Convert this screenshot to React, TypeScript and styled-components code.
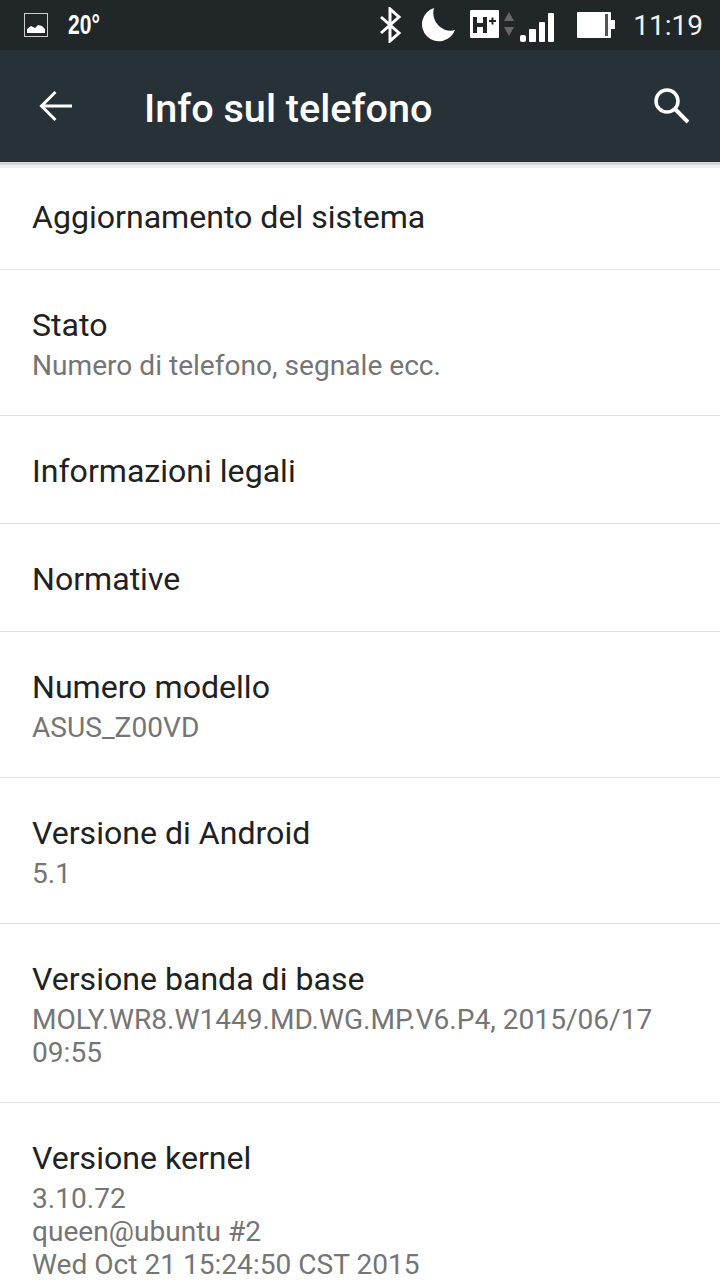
import React from "react";
import styled, { createGlobalStyle } from "styled-components";

const Global = createGlobalStyle`
  html, body { margin: 0; padding: 0; background: #fff; }
  body { width: 720px; height: 1280px; overflow: hidden; font-family: Roboto, "Liberation Sans", sans-serif; }
`;

const Screen = styled.div`
  width: 720px;
  height: 1280px;
  display: flex;
  flex-direction: column;
  overflow: hidden;
  background: #fff;
`;

const StatusBar = styled.div`
  height: 50px;
  flex: none;
  background: #212729;
  display: flex;
  align-items: center;
  padding: 0 17px 0 24px;
  color: #fff;
`;

const Temp = styled.span`
  margin-left: 20px;
  font-family: "Liberation Sans", sans-serif;
  font-weight: 700;
  font-size: 27px;
  transform: scaleX(0.78);
  transform-origin: left center;
  flex: 1;
`;

const Clock = styled.span`
  margin-left: 18px;
  font-size: 28px;
  color: #f2f2f2;
`;

const Toolbar = styled.header`
  height: 112px;
  flex: none;
  box-sizing: border-box;
  background: #263238;
  display: flex;
  align-items: center;
  padding: 0 31px 0 39px;
  box-shadow: 0 3px 0 #d4d4d4, 0 6px 0 #efefef;
  position: relative;
  z-index: 1;
`;

const ToolbarTitle = styled.h1`
  margin: 4px 0 0 71px;
  flex: 1;
  font-size: 39.6px;
  font-weight: 500;
  color: #fff;
`;

const List = styled.div`
  display: flex;
  flex-direction: column;
`;

const Row = styled.div`
  padding: 35px 32px 32px;
  border-bottom: 1px solid #e2e2e2;
`;

const RowTitle = styled.div`
  font-size: 32.1px;
  line-height: 40px;
  color: #212121;
`;

const RowSub = styled.div`
  font-size: 28.1px;
  line-height: 33px;
  color: #757575;
  margin: 4px 0 1px;
  white-space: pre-line;
`;

const Glyph = styled.svg<{ $gap?: number }>`
  display: block;
  flex: none;
  margin-left: ${(p) => p.$gap ?? 0}px;
`;

const rows: { title: string; sub?: string }[] = [
  { title: "Aggiornamento del sistema" },
  { title: "Stato", sub: "Numero di telefono, segnale ecc." },
  { title: "Informazioni legali" },
  { title: "Normative" },
  { title: "Numero modello", sub: "ASUS_Z00VD" },
  { title: "Versione di Android", sub: "5.1" },
  { title: "Versione banda di base", sub: "MOLY.WR8.W1449.MD.WG.MP.V6.P4, 2015/06/17\n09:55" },
  { title: "Versione kernel", sub: "3.10.72\nqueen@ubuntu #2\nWed Oct 21 15:24:50 CST 2015" },
];

export default function App() {
  return (
    <Screen>
      <Global />
      <StatusBar>
        <Glyph width="24" height="24" viewBox="0 0 24 24">
          <rect x="0.5" y="0.5" width="23" height="23" fill="none" stroke="#ccc" />
          <path d="M3 20v-4l4-3 4 2 3-3 4 1 3 3v4z" fill="#fff" />
        </Glyph>
        <Temp>20°</Temp>
        <Glyph width="24" height="36" viewBox="0 0 24 36">
          <path d="M3 10l18 16-9 8V2l9 8L3 26" fill="none" stroke="#fff" strokeWidth="3" />
        </Glyph>
        <Glyph width="34" height="34" viewBox="0 0 34 34" $gap={20}>
          <path d="M12 0A17 17 0 1 0 33 22C22 26 8 14 12 0z" fill="#fff" />
        </Glyph>
        <Glyph width="44" height="32" viewBox="0 0 44 32" $gap={14}>
          <rect x="0" y="1" width="29" height="28" rx="1" fill="#fff" />
          <path d="M3 8h4v6h6V8h4v16h-4v-6H7v6H3z" fill="#212729" />
          <path d="M19 12h7M22.500 8.500v7" stroke="#212729" strokeWidth="2" />
          <path d="M39 3l5 9H34zM34 18h10l-5 9z" fill="#666" />
        </Glyph>
        <Glyph width="34" height="34" viewBox="0 0 34 34" $gap={6}>
          <rect x="0" y="27" width="6" height="7" rx="2" fill="#fff" />
          <rect x="9" y="21" width="7" height="13" rx="1" fill="#fff" />
          <rect x="19" y="14" width="6" height="20" rx="1" fill="#fff" />
          <rect x="28" y="5" width="6" height="29" rx="1" fill="#fff" />
        </Glyph>
        <Glyph width="38" height="26" viewBox="0 0 38 26" $gap={23}>
          <rect x="0" y="0" width="34" height="26" rx="1" fill="#fff" />
          <rect x="28" y="2" width="3" height="22" fill="#555" />
          <rect x="34" y="8" width="4" height="9" fill="#fff" />
        </Glyph>
        <Clock>11:19</Clock>
      </StatusBar>
      <Toolbar>
        <Glyph width="34" height="34" viewBox="0 0 34 34">
          <path d="M33 17H3M16.500 3L2.500 17l14 14" fill="none" stroke="#fff" strokeWidth="3" />
        </Glyph>
        <ToolbarTitle>Info sul telefono</ToolbarTitle>
        <Glyph width="36" height="36" viewBox="0 1 36 36">
          <circle cx="14" cy="14" r="11" fill="none" stroke="#fff" strokeWidth="3.500" />
          <path d="M22 22l13 13" stroke="#fff" strokeWidth="4" />
        </Glyph>
      </Toolbar>
      <List>
        {rows.map((r) => (
          <Row key={r.title}>
            <RowTitle>{r.title}</RowTitle>
            {r.sub && <RowSub>{r.sub}</RowSub>}
          </Row>
        ))}
      </List>
    </Screen>
  );
}
